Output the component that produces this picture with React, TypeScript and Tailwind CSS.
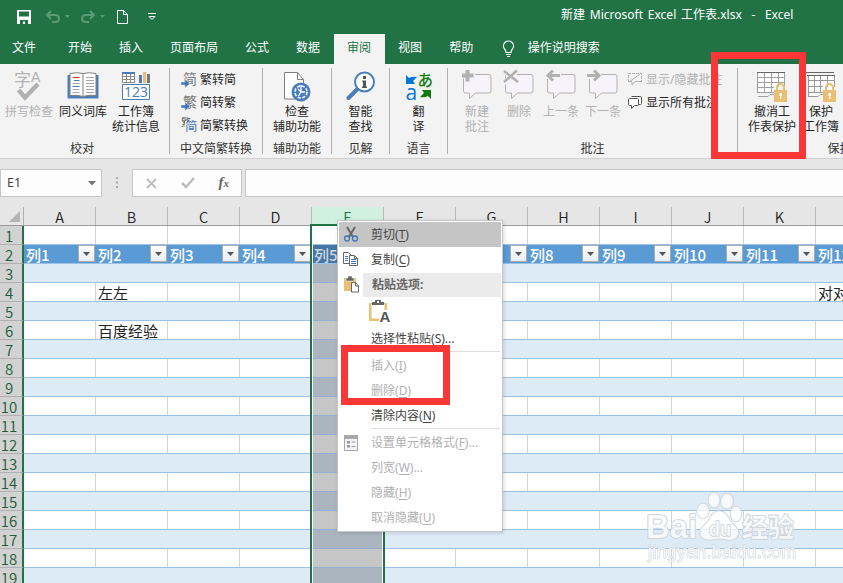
import React from 'react';
import clsx from 'clsx';

interface ToolProps {
  icon: React.ReactNode;
  lines: string[];
  className?: string;
  disabled?: boolean;
}

const CJK = 'Noto Sans CJK SC';

const Tool: React.FC<ToolProps> = ({ icon, lines, className, disabled }) => (
  <div className={clsx('flex shrink-0 flex-col items-center whitespace-nowrap', disabled ? 'text-[#b1b1b1]' : 'text-[#262626]', className)}>
    <div className="flex h-9 items-start">{icon}</div>
    {lines.map((line) => (
      <span key={line} className="h-[15px] leading-[15px]">{line}</span>
    ))}
  </div>
);

interface GroupProps {
  label: string;
  className: string;
  children: React.ReactNode;
  last?: boolean;
}

const Group: React.FC<GroupProps> = ({ label, className, children, last }) => (
  <section className={clsx('flex h-[86px] shrink-0 flex-col', !last && 'border-r border-[#b1b1b1]', className)}>
    <div className="flex h-[72px] justify-center">{children}</div>
    <div className="h-[14px] text-center leading-[18px] whitespace-nowrap text-[#333]">{label}</div>
  </section>
);

/* ---------- ribbon icons ---------- */

const SpellIcon = () => (
  <svg width="32" height="34" viewBox="0 0 32 34">
    <text x="1" y="18" fontSize="17" fill="#b1b1b1" fontFamily={CJK}>字</text>
    <text x="18" y="14" fontSize="14" fill="#b1b1b1" fontFamily="Liberation Sans">A</text>
    <path d="M5.500 22l6.500 7.500L25 16" fill="none" stroke="#b1b1b1" strokeWidth="4.500" />
  </svg>
);

const BookIcon = () => (
  <svg width="32" height="34" viewBox="0 0 32 34">
    <path d="M0.500 7h31v23.500h-31z" fill="#4a7ebb" />
    <path d="M3 5.500q7-1.500 13 0q6-1.500 13 0v22q-7-1-13 1q-6-2-13-1z" fill="#fff" stroke="#7f7f7f" />
    <path d="M16 6v22" stroke="#7f7f7f" />
    <path d="M5.500 9.500h7" stroke="#d24726" strokeWidth="1.300" />
    <path d="M7 12.500h5.500M5.500 18.500h7" stroke="#4a7ebb" />
    <path d="M5.500 15.500h7M5.500 21.500h7M5.500 24.500h7M19 9.500h8M19 12.500h8M19 15.500h8M19 18.500h8M19 21.500h8M19 24.500h8" stroke="#a6a6a6" />
  </svg>
);

const StatsIcon = () => (
  <svg width="30" height="34" viewBox="0 0 30 34">
    <path d="M1.500 4.500h12v10h-12zM5.500 5v9M9.500 5v9M1 8.500h13M1 11.500h13" fill="#fff" stroke="#8a8a8a" />
    <path d="M1 5h13" stroke="#4a7ebb" strokeWidth="2" />
    <path d="M18 7h3v8h-3z" fill="#4a7ebb" />
    <path d="M22 4h3v11h-3z" fill="#eabf73" />
    <path d="M26 6h3v9h-3z" fill="#777" />
    <path d="M1.500 16.500h27v15h-27z" fill="#fff" stroke="#4a7ebb" />
    <text x="3" y="29" fontSize="14" textLength="24" fill="#4a7ebb" fontFamily="Open Sans">123</text>
  </svg>
);

const ConvertIcon = ({ glyph }: { glyph: string }) => (
  <svg width="17" height="18" viewBox="0 0 17 18">
    <text x="2" y="13" fontSize="14" fill="#777" fontFamily={CJK}>{glyph}</text>
    <path d="M0 11h4V8l5 4.500L4 17v-3H0z" fill="#3e76b8" stroke="#f3f3f3" strokeWidth="0.500" />
  </svg>
);

const ConvertBothIcon = () => (
  <svg width="17" height="18" viewBox="0 0 17 18">
    <text x="0" y="9" fontSize="10" fill="#555" fontFamily={CJK}>繁</text>
    <path d="M4 4h13v12H4z" fill="#f3f3f3" />
    <text x="4" y="14" fontSize="12.500" fill="#3e76b8" fontFamily={CJK}>简</text>
  </svg>
);

const AccessIcon = () => (
  <svg width="28" height="34" viewBox="0 0 28 34">
    <path d="M1.500 4.500h13l6 7v19.500h-19z" fill="#fff" stroke="#7f7f7f" />
    <path d="M14.500 4.500v7h6" fill="none" stroke="#7f7f7f" />
    <circle cx="18" cy="24" r="9.500" fill="#4a7ebb" />
    <circle cx="18" cy="24" r="6" fill="none" stroke="#fff" strokeWidth="1.500" strokeDasharray="3.200 1.500" />
    <path d="M18 17v7M18 24h4M15 21l3 3M15.500 28l2.500-4" fill="none" stroke="#fff" strokeWidth="1.300" />
  </svg>
);

const LookupIcon = () => (
  <svg width="30" height="34" viewBox="0 0 30 34">
    <path d="M2.500 30l10-10" stroke="#4a7ebb" strokeWidth="4" strokeLinecap="round" />
    <circle cx="18.500" cy="14" r="9.500" fill="#fff" stroke="#4a7ebb" strokeWidth="2" />
    <path d="M17 8h3v3h-3zM16.500 12.500h3.500v6h1v1.500h-5v-1.500h1v-4.500h-1z" fill="#555" />
  </svg>
);

const TranslateIcon = () => (
  <svg width="28" height="34" viewBox="0 0 28 34">
    <text x="12.500" y="18" fontSize="15.500" fontWeight="500" fill="#107c10" fontFamily={CJK}>あ</text>
    <text x="0.500" y="31.500" fontSize="21" fill="#0078d7" fontFamily="Open Sans">a</text>
    <path d="M1 7l3 3q4-2 8-1l-4 4 2 3H1z" fill="#0078d7" />
    <path d="M26 31l-3-3q-4 2-8 1l4-4-2-3h9z" fill="#107c10" />
  </svg>
);

const CommentIcon = ({ kind }: { kind: 'new' | 'delete' | 'prev' | 'next' }) => (
  <svg width="32" height="34" viewBox="0 0 32 34">
    <path d="M4.500 6.500q-2 0-2 2v14.500q0 2 2 2h4v5.500l6-5.500h13.500q2 0 2-2v-14.500q0-2-2-2z" fill="#f7f3fa" stroke="#b1b1b1" />
    {kind === 'new' && <path d="M0 7.500h14M6.500 1v14" stroke="#f3f3f3" strokeWidth="6" />}
    {kind === 'new' && <path d="M1 7.500h11.500M6.500 2v11.500" stroke="#b1b1b1" strokeWidth="4" />}
    {kind === 'delete' && <path d="M1 2l14 13M15 2L1 15" stroke="#f3f3f3" strokeWidth="5" />}
    {kind === 'delete' && <path d="M1 3l14 11M14 2.500L1 14" stroke="#b1b1b1" strokeWidth="2.500" />}
    {kind === 'prev' && <path d="M2 7.500h14M3 4v7" stroke="#f3f3f3" strokeWidth="6" />}
    {kind === 'prev' && <path d="M2 7.500h13M8 2.500L3 7.500l5 5" fill="none" stroke="#b1b1b1" strokeWidth="3" />}
    {kind === 'next' && <path d="M0 7.500h14M3 4v7" stroke="#f3f3f3" strokeWidth="6" />}
    {kind === 'next' && <path d="M0 7.500h13M7 2.500l5 5-5 5" fill="none" stroke="#b1b1b1" strokeWidth="3" />}
  </svg>
);

const Lock = () => (
  <g>
    <path d="M21 22v-2.500a3.500 3.500 0 0 1 7 0V22" fill="none" stroke="#eabf73" strokeWidth="2" />
    <path d="M18 22h13v12H18z" fill="#eabf73" />
    <path d="M23.500 25h2.500v3h-.700v3h-1.200v-3h-.600z" fill="#fff" />
  </g>
);

const SheetLockIcon = () => (
  <svg width="32" height="34" viewBox="0 0 32 34">
    <path d="M1.500 3.500h27v16h-10v5h-17z" fill="#fff" />
    <path d="M1.500 25V4.500M8.500 4v20M15.500 4v20M22.500 4v15M28.500 4v14M1 9.500h28M1 14.500h28M1 19.500h17M1 24.500h17M2 28.500h10l2-2h4" fill="none" stroke="#a0a0a0" />
    <path d="M1 4.500h28" stroke="#666" />
    <Lock />
  </svg>
);

const BookLockIcon = () => (
  <svg width="32" height="34" viewBox="0 0 32 34">
    <path d="M0.500 29V4.500H29" fill="none" stroke="#666" />
    <path d="M3.500 7.500h26v20h-26z" fill="#fff" />
    <path d="M3.500 29V7.500M9.500 7v18M15.500 7v18M22.500 7v12M29.500 7v12M3 12.500h27M3 18.500h15M3 24.500h15M3 28.500h10l2-2h3" fill="none" stroke="#999" />
    <path d="M2 7.500h28" stroke="#666" />
    <Lock />
  </svg>
);

/* ---------- top bars ---------- */

const TitleBar = () => (
  <header className="flex h-[34px] items-center pl-[17px] text-white">
    <svg className="h-[34px] w-[145px] shrink-0" viewBox="0 0 145 34" fill="none">
      <path d="M0 10h14v14H0z" fill="#fff" />
      <path d="M2 11.500h10v5H2zM3 20h8v4H3z" fill="#217346" />
      <path d="M6 21.500h2V24H6z" fill="#fff" />
      <path d="M30 15h8q4 0 4 3.500T38 22h-3M34 11l-4 4 4 4" stroke="#5a9a77" strokeWidth="2" />
      <path d="M48 15h5l-2.500 3zM83 15h5l-2.500 3z" fill="#5a9a77" />
      <path d="M77 15h-8q-4 0-4 3.500T69 22h3M73 11l4 4-4 4" stroke="#5a9a77" strokeWidth="2" />
      <path d="M100.500 10.500h6l4 4v9h-10zM106.500 10.500v4h4" stroke="#fff" />
      <path d="M131 13.500h8M132 16.500h6l-3 3z" stroke="#fff" />
    </svg>
    <div className="ml-[399px] pb-1 whitespace-pre text-[12px] [word-spacing:1.7px]">
      新建 Microsoft Excel 工作表.xlsx  -  Excel
    </div>
  </header>
);

const tabs = ['开始', '插入', '页面布局', '公式', '数据', '审阅', '视图', '帮助'];

const TabBar = () => (
  <nav className="flex h-[30px] items-stretch pl-3 leading-7 whitespace-nowrap text-white">
    <span className="mr-[18.500px]">文件</span>
    {tabs.map((tab) => (
      <span
        key={tab}
        className={clsx('px-[13.500px]', tab === '审阅' && 'bg-[#f3f3f3] text-[#217346]')}
      >
        {tab}
      </span>
    ))}
    <svg className="mt-[6px] ml-[15px] shrink-0" width="13" height="18" viewBox="0 0 13 18" fill="none" stroke="#fff">
      <path d="M4 12.500q0-2-1.500-3.500a5 5 0 1 1 8 0Q9 10.500 9 12.500zM4 14.500h5M5 16.500h3" strokeWidth="1.200" />
    </svg>
    <span className="ml-[13px]">操作说明搜索</span>
  </nav>
);

const Ribbon = () => (
  <div className="flex h-[95px] overflow-hidden border-b border-[#d0d0d0] bg-[#f3f3f3] pt-1">
    <Group label="校对" className="w-[170px] pr-[5px]">
      <Tool className="w-[56px]" icon={<SpellIcon />} lines={['拼写检查']} disabled />
      <Tool className="w-[52px]" icon={<BookIcon />} lines={['同义词库']} />
      <Tool className="w-[54px]" icon={<StatsIcon />} lines={['工作簿', '统计信息']} />
    </Group>
    <Group label="中文简繁转换" className="w-[93px]">
      <div className="flex w-full flex-col pl-[11px] text-[#262626]">
        <div className="flex h-[23px] items-center gap-[2px]"><ConvertIcon glyph="简" />繁转简</div>
        <div className="flex h-[23px] items-center gap-[2px]"><ConvertIcon glyph="繁" />简转繁</div>
        <div className="flex h-[23px] items-center gap-[2px]"><ConvertBothIcon />简繁转换</div>
      </div>
    </Group>
    <Group label="辅助功能" className="w-[69px]">
      <Tool icon={<AccessIcon />} lines={['检查', '辅助功能']} />
    </Group>
    <Group label="见解" className="w-[58px]">
      <Tool icon={<LookupIcon />} lines={['智能', '查找']} />
    </Group>
    <Group label="语言" className="w-[58px]">
      <Tool icon={<TranslateIcon />} lines={['翻', '译']} />
    </Group>
    <Group label="批注" className="w-[290px]">
      <div className="flex w-full pl-2">
        <Tool className="w-[42px]" icon={<CommentIcon kind="new" />} lines={['新建', '批注']} disabled />
        <Tool className="w-[42px]" icon={<CommentIcon kind="delete" />} lines={['删除']} disabled />
        <Tool className="w-[42px]" icon={<CommentIcon kind="prev" />} lines={['上一条']} disabled />
        <Tool className="w-[42px]" icon={<CommentIcon kind="next" />} lines={['下一条']} disabled />
        <div className="ml-1 flex flex-col whitespace-nowrap">
          <div className="flex h-[23px] items-center gap-1 text-[#b1b1b1]">
            <svg width="14" height="16" viewBox="0 0 14 16" fill="none" stroke="#b1b1b1">
              <path d="M.500 10V1.500h13V10" strokeDasharray="3 1" />
              <path d="M.500 9.500H4V13l3-3.500h6.500M1 10L12 2" />
            </svg>
            显示/隐藏批注
          </div>
          <div className="flex h-[23px] items-center gap-1 text-[#262626]">
            <svg width="14" height="16" viewBox="0 0 14 16" fill="#fff" stroke="#555">
              <path d="M3.500 1.500h9q1 0 1 1v6q0 1-1 1h-2" />
              <path d="M1.500 3.500h8q1 0 1 1v5q0 1-1 1H6.500L3.500 13.500v-3h-2q-1 0-1-1v-5q0-1 1-1z" />
            </svg>
            显示所有批注
          </div>
        </div>
      </div>
    </Group>
    <Group label="保护" className="w-[203px]" last>
      <div className="flex w-full pl-2">
        <Tool className="w-[52px]" icon={<SheetLockIcon />} lines={['撤消工', '作表保护']} />
        <Tool className="w-[46px]" icon={<BookLockIcon />} lines={['保护', '工作簿']} />
      </div>
    </Group>
  </div>
);

const FormulaBar = () => (
  <div className="flex h-12 items-start pt-[10px]">
    <div className="flex h-7 w-[102px] shrink-0 items-center justify-between border border-[#c6c6c6] bg-[#fdfdfd] pr-[5px] pl-[6px] text-[#444]">
      <span className="pt-px text-[12.500px]">E1</span>
      <svg width="8" height="5" viewBox="0 0 8 5"><path d="M0 0h8L4 4.500z" fill="#777" /></svg>
    </div>
    <svg className="mx-[14px] mt-[8px] shrink-0" width="2" height="11" viewBox="0 0 2 11">
      <path d="M0 0h2v2H0zM0 4.500h2v2H0zM0 9h2v2H0z" fill="#aaa" />
    </svg>
    <div className="flex h-7 w-[110px] shrink-0 items-center justify-between border border-[#c6c6c6] bg-[#fdfdfd] pr-3 pl-[13px]">
      <svg width="11" height="11" viewBox="0 0 11 11"><path d="M1 1l9 9M10 1l-9 9" stroke="#bdbdbd" strokeWidth="1.800" /></svg>
      <svg width="14" height="12" viewBox="0 0 14 12"><path d="M1 6l4 4 8-9" fill="none" stroke="#bdbdbd" strokeWidth="2.500" /></svg>
      <span className="pb-0.5 font-['Liberation_Serif',serif] text-[15px] font-bold text-[#666] italic">f<span className="text-[11px]">x</span></span>
    </div>
    <div className="ml-[3px] h-7 flex-1 border border-r-0 border-[#c6c6c6] bg-[#fdfdfd]" />
  </div>
);

/* ---------- sheet ---------- */

const columns = ['A', 'B', 'C', 'D', 'E', 'F', 'G', 'H', 'I', 'J', 'K', 'L'];
const rowNumbers = Array.from({ length: 19 }, (_, i) => i + 1);
const cells: Record<string, string> = { B4: '左左', B6: '百度经验', L4: '对对' };

const FilterButton = () => (
  <span className="flex h-[17px] w-[17px] shrink-0 items-center justify-center border border-[#ababab] bg-linear-to-b from-white to-[#e9edf3]">
    <svg width="7" height="4" viewBox="0 0 7 4"><path d="M0 0h7L3.500 4z" fill="#555" /></svg>
  </span>
);

const HeaderCell = ({ index }: { index: number }) => (
  <div
    className={clsx(
      'flex w-[72px] shrink-0 items-start justify-between border-b border-[#9bc2e6] pr-px pl-[2px] font-medium',
      index === 4 ? 'bg-[#4677a4] text-[#d0d8e0]' : 'bg-[#5b9bd5] text-white',
    )}
  >
    <span className="leading-[19px]">列{index + 1}</span>
    <FilterButton />
  </div>
);

const BodyCell = ({ row, column }: { row: number; column: string }) => {
  const banded = row > 1 && row % 2 === 1;
  const selected = column === 'E' && row > 1;
  return (
    <div
      className={clsx(
        'w-[72px] shrink-0 overflow-visible border-b pl-[2px] leading-[19px] whitespace-nowrap text-[#222]',
        selected ? 'border-[#8fb0d2]' : 'border-[#9bc2e6]',
        selected && (banded ? 'bg-[#abb5c0]' : 'bg-[#c6c6c6]'),
        !selected && (banded ? 'bg-[#ddebf7]' : 'bg-white shadow-[inset_-1px_0_0_#d4d4d4]'),
      )}
    >
      {cells[`${column}${row}`]}
    </div>
  );
};

const Sheet = () => (
  <div className="text-[15px]">
    <div className="flex h-[19px] border-b border-[#9b9b9b] text-[14.500px]">
      <div className="flex w-6 shrink-0 items-end justify-end border-r border-[#b0b0b0] pr-[3px] pb-[3px]">
        <svg width="11" height="11" viewBox="0 0 11 11"><path d="M11 0v11H0z" fill="#b4b4b4" /></svg>
      </div>
      {columns.map((name) => (
        <div
          key={name}
          className={clsx(
            'w-[72px] shrink-0 border-r border-[#b8b8b8] text-center leading-[19px] font-[350]',
            name === 'E' ? 'bg-[#d2f0e0] text-[#217346]' : 'text-[#222]',
          )}
        >
          {name}
        </div>
      ))}
    </div>
    {rowNumbers.map((row) => (
      <div key={row} className="flex h-[19px]">
        <div className="w-6 shrink-0 border-r-2 border-b border-r-[#217346] border-b-[#b0b0b0] bg-[#d2d2d2] pr-1 text-center leading-[20px] font-[350] text-[#205c3c]">
          {row}
        </div>
        {columns.map((column, index) =>
          row === 2 ? (
            <HeaderCell key={column} index={index} />
          ) : (
            <BodyCell key={column} row={row} column={column} />
          ),
        )}
      </div>
    ))}
  </div>
);

/* ---------- context menu ---------- */

interface MenuItemProps {
  label: string;
  hotkey: string;
  more?: boolean;
  disabled?: boolean;
  active?: boolean;
  icon?: React.ReactNode;
}

const MenuItem: React.FC<MenuItemProps> = ({ label, hotkey, more, disabled, active, icon }) => (
  <div
    className={clsx(
      'flex h-[25px] shrink-0 items-center',
      active && 'bg-[#c5c5c5]',
      disabled ? 'text-[#b1b1b1]' : 'text-[#444]',
    )}
  >
    <div className="flex w-8 shrink-0 pl-1">{icon}</div>
    <span>
      {label}(<span className="underline underline-offset-2">{hotkey}</span>){more && '...'}
    </span>
  </div>
);

const CutIcon = () => (
  <svg width="16" height="17" viewBox="0 0 16 17" fill="none">
    <path d="M4 1l6 10M12 1L6 11" stroke="#666" strokeWidth="2" />
    <circle cx="4" cy="12.500" r="2.500" stroke="#3e76b8" strokeWidth="1.300" />
    <circle cx="12" cy="12.500" r="2.500" stroke="#3e76b8" strokeWidth="1.300" />
  </svg>
);

const CopyIcon = () => (
  <svg width="16" height="16" viewBox="0 0 16 16" fill="#fff" stroke="#666">
    <path d="M.500.500h5l3 3v8h-8z" />
    <path d="M2 4.500h3M2 6.500h3M2 8.500h3" stroke="#3e76b8" />
    <path d="M6.500 3.500h5l3 3v7h-8zM11.500 3.500v3h3" />
    <path d="M8 7.500h5M8 9.500h5M8 11.500h5" stroke="#3e76b8" />
  </svg>
);

const PasteIcon = () => (
  <svg width="17" height="17" viewBox="-1 0 17 17">
    <path d="M0 2h12v13H0z" fill="#eabf73" />
    <path d="M2 2h2V0h4v2h2v3H2z" fill="#666" stroke="#fff" strokeWidth="0.500" />
    <path d="M7.500 6.500h4l3 3.500v6h-7zM11.500 6.500V10H15" fill="#fff" stroke="#666" />
  </svg>
);

const FormatIcon = () => (
  <svg className="ml-px" width="14" height="16" viewBox="0 0 14 16">
    <path d="M.500.500h13v15H.500z" fill="#f7f3fa" stroke="#a8a8a8" />
    <path d="M0 0h14v4H0z" fill="#a8a8a8" />
    <path d="M3 6h3v2.500H3zM3 10h3v2.500H3zM7.500 6.500h4v1h-4zM7.500 11h4v1h-4z" fill="#999" />
  </svg>
);

const Divider = () => <div className="mr-px ml-8 h-0.5 shrink-0 border-t border-[#dedede]" />;

const ContextMenu = () => (
  <div className="absolute top-[220px] left-[337px] flex h-[312px] w-[166px] flex-col border border-[#c6c6c6] bg-white p-px whitespace-nowrap shadow-[1px_1px_4px_rgba(0,0,0,0.150)]">
    <MenuItem label="剪切" hotkey="T" active icon={<CutIcon />} />
    <MenuItem label="复制" hotkey="C" icon={<CopyIcon />} />
    <div className="flex h-[25px] shrink-0 items-center">
      <div className="w-6 shrink-0 pl-1"><PasteIcon /></div>
      <div className="flex h-6 flex-1 items-center bg-[#ebebeb] pl-[9px] font-bold text-[#666]">粘贴选项:</div>
    </div>
    <div className="h-[29px] shrink-0 pt-[2px] pl-[30px]">
      <svg width="22" height="24" viewBox="0 0 22 24">
        <path d="M0 4h18v18H0z" fill="#eabf73" />
        <path d="M2.500 5h13v14.500h-13z" fill="#fff" />
        <path d="M3 3h3V1h6v2h3v3H3z" fill="#666" />
        <path d="M8 2h2v2H8zM10 11h12v13H10z" fill="#fff" />
        <text x="10.500" y="22.500" fontSize="15" fontWeight="700" fill="#555" fontFamily="Liberation Sans">A</text>
      </svg>
    </div>
    <MenuItem label="选择性粘贴" hotkey="S" more />
    <Divider />
    <MenuItem label="插入" hotkey="I" disabled />
    <MenuItem label="删除" hotkey="D" disabled />
    <MenuItem label="清除内容" hotkey="N" />
    <Divider />
    <MenuItem label="设置单元格格式" hotkey="F" more disabled icon={<FormatIcon />} />
    <MenuItem label="列宽" hotkey="W" more disabled />
    <MenuItem label="隐藏" hotkey="H" disabled />
    <MenuItem label="取消隐藏" hotkey="U" disabled />
  </div>
);

const Watermark = () => (
  <svg className="absolute top-[488px] left-[640px]" width="165" height="82" viewBox="0 0 165 82">
    <g fill="#fff" fillOpacity="0.750" stroke="#cdd2d8" strokeWidth="1.600" paintOrder="stroke" fontFamily="Liberation Sans">
      <text x="6" y="50" fontSize="33" fontWeight="700" textLength="51" lengthAdjust="spacingAndGlyphs">Bai</text>
      <ellipse cx="63" cy="23" rx="6" ry="7.500" />
      <ellipse cx="74" cy="12" rx="5.500" ry="7.500" />
      <ellipse cx="87" cy="13" rx="6" ry="7.500" />
      <ellipse cx="96" cy="26" rx="5.500" ry="7.500" />
      <path d="M79 23q6 0 9 6t8 10q5 6 0 11q-4 3-10 1.500t-14 0q-7 1-10-2q-4-6 1-11q5-4 7.500-9.500t8.500-6z" />
      <text x="69" y="48" fontSize="21" fontWeight="700" textLength="22" lengthAdjust="spacingAndGlyphs">du</text>
      <text x="102" y="49" fontSize="26" fontWeight="700" fontFamily={CJK}>经验</text>
      <text x="8" y="70" fontSize="17.500" textLength="148" strokeWidth="1">jingyan.baidu.com</text>
    </g>
  </svg>
);

export default function App() {
  return (
    <div className="relative h-[583px] w-[843px] overflow-hidden bg-[#e6e6e6] font-['Noto_Sans','Noto_Sans_CJK_SC',sans-serif] text-[12px]">
      <div className="bg-[#217346]">
        <TitleBar />
        <TabBar />
      </div>
      <Ribbon />
      <FormulaBar />
      <div className="font-['Noto_Sans_CJK_SC',sans-serif]">
        <Sheet />
      </div>
      {/* selected column outline */}
      <div className="absolute top-[224px] left-[310px] h-[370px] w-[75px] border-2 border-[#217346] shadow-[inset_1px_0_0_#fff,inset_-1px_0_0_#fff]" />
      <Watermark />
      <ContextMenu />
      <div className="absolute top-[345px] left-[341px] h-[60px] w-[109px] border-[7px] border-[#fb3636]" />
      <div className="absolute top-[52px] left-[711px] h-[107px] w-[95px] border-[7px] border-[#fb3636]" />
    </div>
  );
}
